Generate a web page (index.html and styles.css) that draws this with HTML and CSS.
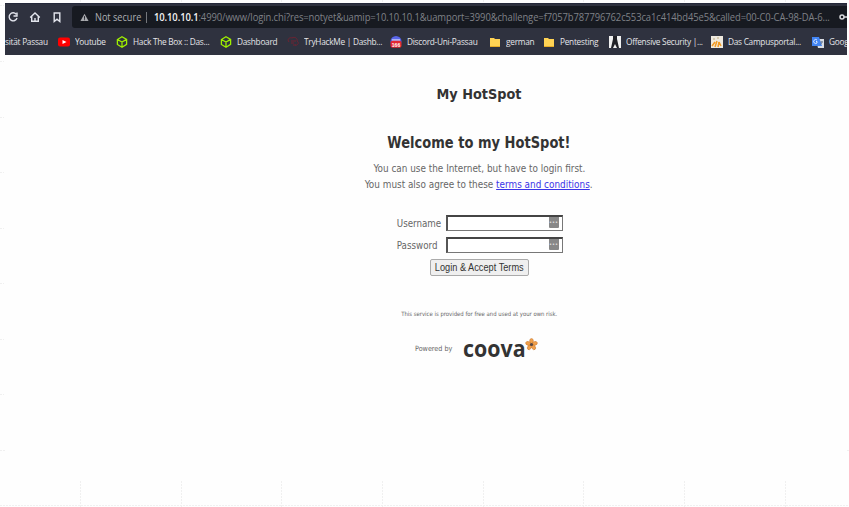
FILE: index.html
```
<!DOCTYPE html>
<html lang="en"><head><meta charset="utf-8"><title>My HotSpot</title><link rel="stylesheet" href="styles.css"></head>
<body>
<div class="browser">
<header>
<div class="toolbar">
<svg class="nav" viewBox="0 0 60 20" fill="none" stroke="#e3e5ed" stroke-width="1.4"><path d="M11.200 7.200A4 4 0 1 0 12 11M12 5.500V9H8.500"/><path d="M25.200 10.500L30 6l4.800 4.500M26.700 9.500v4.800h6.600V9.500M30 14v-3M49.200 6h5.600v8.500L52 12.200l-2.800 2.300z"/></svg>
<div class="address"><svg class="warn" viewBox="0 0 10 10"><path d="M5 .7L9.500 9H.5z" fill="#a8a9ad"/><path d="M5 3.500v3M5 7v1" stroke="#171a21"/></svg><span class="unsafe">Not secure</span><i class="bar"></i><div class="urlbox"><span class="url"><b>10.10.10.1</b>:4990/www/login.chi?res=notyet&amp;uamip=10.10.10.1&amp;uamport=3990&amp;challenge=f7057b787796762c553ca1c414bd45e5&amp;called=00-C0-CA-98-DA-6...</span></div>
<svg class="key" viewBox="0 0 9 8" fill="none" stroke="#d8d9dc" stroke-width="1.500"><circle cx="3" cy="4" r="2"/><path d="M5 4h4"/></svg></div>
</div>
<nav class="bookmarks">
<div class="bm first"><span>sität Passau</span></div>
<div class="bm"><svg viewBox="0 0 12 12"><rect y="1.500" width="12" height="9" rx="2" fill="#f00"/><path d="M4.500 4v4l4-2z" fill="#fff"/></svg><span>Youtube</span></div>
<div class="bm"><svg viewBox="0 0 12 12"><path d="M6 .8l4.600 2.600v5L6 11.200 1.400 8.500v-5zM1.400 3.500L6 6l4.600-2.600M6 6v5" fill="none" stroke="#9fef00" stroke-width="1.300"/></svg><span>Hack The Box :: Das...</span></div>
<div class="bm"><svg viewBox="0 0 12 12"><path d="M6 .8l4.600 2.600v5L6 11.200 1.400 8.500v-5zM1.400 3.500L6 6l4.600-2.600M6 6v5" fill="none" stroke="#9fef00" stroke-width="1.300"/></svg><span>Dashboard</span></div>
<div class="bm"><svg viewBox="0 0 12 12"><path d="M2 6C-.5 3 3 1 5 2c3-2 6 1 5 3 3 2 0 5-2 4M4 5h5M4 7h3M6 9h3" fill="none" stroke="#702332"/></svg><span>TryHackMe | Dashb...</span></div>
<div class="bm"><svg viewBox="0 0 12 12"><circle cx="6" cy="5.500" r="5.500" fill="#5865e8"/><path d="M2 4h8" stroke="#fff"/><rect x=".5" y="4.800" width="11" height="7" rx="2" fill="#e22732"/><text x="6" y="10.500" class="count">166</text></svg><span>Discord-Uni-Passau</span></div>
<div class="bm"><svg viewBox="0 0 12 12"><path d="M1 2h4l1 1h5v8H1z" fill="#ffd354"/><path d="M1 10.500h10" stroke="#e7ad28"/></svg><span>german</span></div>
<div class="bm"><svg viewBox="0 0 12 12"><path d="M1 2h4l1 1h5v8H1z" fill="#ffd354"/><path d="M1 10.500h10" stroke="#e7ad28"/></svg><span>Pentesting</span></div>
<div class="bm"><svg viewBox="0 0 12 12"><path d="M0 0h12v12H0z" fill="#f0f0f0"/><path d="M4 0h4v3l2 9H8L6 8l-2 4H2l2-9z" fill="#202126"/></svg><span>Offensive Security |...</span></div>
<div class="bm"><svg viewBox="0 0 12 12"><path d="M0 0h12v12H0z" fill="#eee9de"/><path d="M1 10l3-4M4 11l2-6M7 11l1-5M10 10L8 6" stroke="#f39a22" stroke-width="1.500"/><path d="M2 3h2M6 2h2" stroke="#bda87c"/></svg><span>Das Campusportal...</span></div>
<div class="bm"><svg viewBox="0 0 12 12"><path d="M4 3h8v9H6z" fill="#d8dce3"/><path d="M0 1h7l3 9H0z" fill="#4285f4"/><path d="M5 4a2 2 0 1 0 0 3V5.500H4" fill="none" stroke="#fff" stroke-width=".8"/><path d="M8 6h3M10 5c0 3-2 4-2 4" stroke="#5b6e8d" stroke-width=".8" fill="none"/></svg><span>Goog</span></div>
</nav>
</header>
<main>
<h1><span>My HotSpot</span></h1>
<h2>Welcome to my HotSpot!</h2>
<p class="intro l1">You can use the Internet, but have to login first.</p>
<p class="intro l2">You must also agree to these <a href="#">terms and conditions</a>.</p>
<form>
<label><span>Username</span><div class="field"><i>•••</i></div></label>
<label><span>Password</span><div class="field"><i>•••</i></div></label>
<button type="button"><span>Login &amp; Accept Terms</span></button>
</form>
<p class="notice">This service is provided for free and used at your own risk.</p>
<div class="powered"><small>Powered by</small><strong>coova</strong><svg viewBox="0 0 14 14"><g fill="#f0a04b" stroke="#c97931" stroke-width=".6"><ellipse cx="7" cy="3.300" rx="2" ry="2.800"/><ellipse cx="7" cy="3.300" rx="2" ry="2.800" transform="rotate(72 7 7)"/><ellipse cx="7" cy="3.300" rx="2" ry="2.800" transform="rotate(144 7 7)"/><ellipse cx="7" cy="3.300" rx="2" ry="2.800" transform="rotate(216 7 7)"/><ellipse cx="7" cy="3.300" rx="2" ry="2.800" transform="rotate(288 7 7)"/></g><circle cx="7" cy="7" r="1.700" fill="#574846"/></svg></div>
</main>
</div>
<svg class="guides" viewBox="0 0 849 507"><path d="M0 5.500h4M0 61.500h4M0 117.500h4M0 172.500h4M0 228.500h4M0 283.500h4M0 339.500h4M0 394.500h4M0 450.500h5M847 450.500h2M0 505.500h849M80.500 481v26M181.500 481v26M281.500 481v26M382.500 481v26M483.500 481v26M583.500 481v26M684.500 481v26M785.500 481v26M80.500 0v2M181.500 0v2M281.500 0v2M382.500 0v2M483.500 0v2M583.500 0v2M684.500 0v2M785.500 0v2"/></svg>
</body></html>
```
FILE: styles.css
```
*{box-sizing:border-box}
body{margin:0;width:849px;height:507px;overflow:hidden;background:#fefefe;color:#666}
.browser{width:842px;margin:3px 0 0 5px}
header{height:52px;background:#2f323f;border-top:1px solid #24283a;overflow:hidden}
.toolbar{display:flex;height:24px;padding-top:2px}
.nav{width:60px;height:20px;margin-top:1px;flex:none}
.address{flex:1;margin-left:7px;height:22px;background:#171a21;border-radius:3px 0 0 3px;display:flex;align-items:center;color:#7f8187;font:10.5px "Open Sans",sans-serif;white-space:nowrap}
.warn{width:9px;height:9px;margin-left:8px;flex:none}
.unsafe{width:46px;flex:none;margin-left:6px;color:#aeb0b4;transform:scaleX(.87);transform-origin:left}
.bar{width:1px;height:11px;background:#75777c;margin:0 7px 0 5px;flex:none}
.urlbox{width:676px;flex:none}
.url{display:inline-block;letter-spacing:-.1px;transform:scaleX(.896);transform-origin:left}
.url b{font-weight:600;color:#f2f2f3}
.key{width:9px;height:8px;margin-left:9px;flex:none}
.bookmarks{height:27px;display:grid;grid-template-columns:53px 58px 104px 67px 103px 99px 54px 66px 102px 101px 35px;align-items:center}
.bm{display:flex;align-items:center;min-width:0;color:#e4e5e9;font:9.5px "Open Sans",sans-serif;white-space:nowrap}
.bm svg{width:12px;height:12px;flex:none;margin-right:4.5px}
.bm span{letter-spacing:-.3px;transform:scaleX(.872);transform-origin:left}
.count{font:bold 5px "Liberation Sans",sans-serif;fill:#fff;text-anchor:middle}
main{width:240px;margin-left:354px;font-family:"DejaVu Sans Condensed","DejaVu Sans",sans-serif;display:flex;flex-direction:column;align-items:center;white-space:nowrap}
h1,h2,p{margin:0}
h1{font-size:14.3px;line-height:20px;margin-top:29px;color:#333}
h2{font-size:15.5px;line-height:22px;margin-top:28px;color:#333;transform:scaleX(.935)}
.intro{font-size:10.2px;line-height:16px;transform:scaleX(.968)}
.l1{margin-top:7px}
a{color:#3b35e8}
form{display:flex;flex-direction:column;align-items:center;margin-top:22px}
label{display:flex;align-items:center;width:167px;height:16px;font-size:10px;margin:0 0 6px}
label span{width:50px;padding-top:1px;transform:scaleX(.97)}
.field{width:117px;height:16px;border:1px solid #777;border-top:2px solid #444;border-left:2px solid #555;background:#fff;display:flex;justify-content:flex-end}
.field i{width:10px;height:11px;margin-right:3px;background:#888;border-radius:0 0 1px 1px;color:#eee;font:5px/11px "DejaVu Sans",sans-serif;text-align:center}
button{width:99px;height:17px;padding:0;border:1px solid #aaa;border-radius:2px;background:#efefef;color:#333;font:10px "Liberation Sans",sans-serif}
button span{display:inline-block;margin:0 -4px;transform:scaleX(.92)}
.notice{font-size:6px;line-height:8px;margin-top:34px;transform:scaleX(.985)}
.powered{display:flex;align-items:center;width:130px;height:28px;margin:16px 0 0 2px}
small{font-size:7.2px;width:48px}
strong{width:63px;font:700 23px/24px "Open Sans",sans-serif;color:#333;transform:scaleX(.93);transform-origin:left}
.powered svg{width:13px;height:13px;margin:-8px 0 0 -1px;flex:none}
.guides{position:absolute;left:0;top:0;width:849px;height:507px;pointer-events:none;fill:none;stroke:#f0f0f0;stroke-width:1;stroke-dasharray:2 1}
```
